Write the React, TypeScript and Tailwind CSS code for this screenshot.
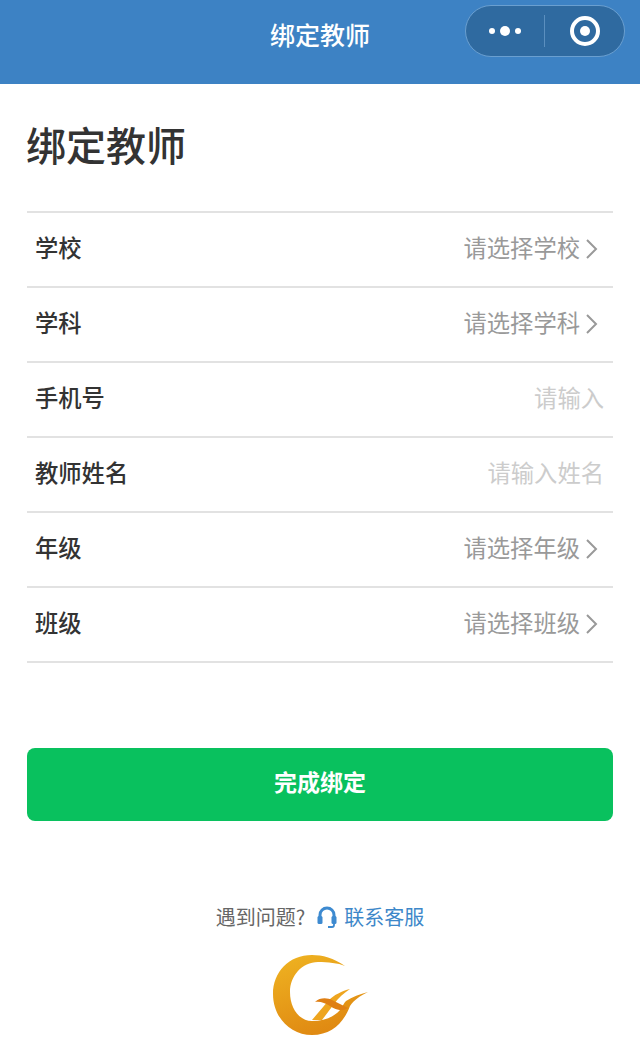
const FONT = "font-['Noto_Sans_CJK_SC','Noto_Sans',sans-serif]";

type Row = {
  label: string;
  value: string;
  arrow: boolean;
};

const rows: Row[] = [
  { label: "学校", value: "请选择学校", arrow: true },
  { label: "学科", value: "请选择学科", arrow: true },
  { label: "手机号", value: "请输入", arrow: false },
  { label: "教师姓名", value: "请输入姓名", arrow: false },
  { label: "年级", value: "请选择年级", arrow: true },
  { label: "班级", value: "请选择班级", arrow: true },
];

const Logo = () => (
  <svg width="96" height="81" viewBox="0 0 96 81">
    <defs>
      <linearGradient id="moon" x1="0" y1="0" x2="0.4" y2="1">
        <stop offset="0" stopColor="#efb422" />
        <stop offset="1" stopColor="#e08a12" />
      </linearGradient>
    </defs>
    <path
      d="M73 12C62 4 50 1 40 1 17 1 1 18 1 40c0 23 17 41 39 41 20 0 32-13 38-29 4-6 10-10 18-14-8 2-16 5-22 9-2 2-4 6-6 9-6 7-16 11-28 11-13 0-22-13-22-29C18 22 30 8 46 8c10 0 20 1 27 4Z"
      fill="url(#moon)"
    />
    <path d="M78 35c-8 2-16 6-21 11L40 66h10l12-16c4-6 10-11 16-15Z" fill="#eea51f" />
    <path d="M43 48c5-5 13-4 17-2l16 8c-6 4-12 2-18-2-5-3-10-5-15-4Z" fill="#df7f14" />
  </svg>
);

export default function App() {
  return (
    <div className={`${FONT} w-[640px] h-[1043px] bg-white overflow-hidden flex flex-col`}>
      <header className="relative h-[84px] bg-[#3d82c4] flex justify-center pt-[15px]">
        <span className="text-[25px] leading-[38px] font-medium text-white">绑定教师</span>
        <div className="absolute left-[465px] top-[5px] w-[160px] h-[52px] rounded-full bg-[#2f6aa0] border border-[#6a9fd0] flex items-center">
          <div className="flex-1 flex justify-center items-center gap-[5px]">
            <span className="w-[6px] h-[6px] rounded-full bg-white" />
            <span className="w-[10px] h-[10px] rounded-full bg-white" />
            <span className="w-[6px] h-[6px] rounded-full bg-white" />
          </div>
          <div className="w-px h-[32px] bg-[#5b8fbf]" />
          <div className="flex-1 flex justify-center pl-[2px]">
            <div className="w-[30px] h-[30px] rounded-full border-[4px] border-white flex items-center justify-center">
              <span className="w-[10px] h-[10px] rounded-full bg-white" />
            </div>
          </div>
        </div>
      </header>

      <main className="flex-1 px-[27px] flex flex-col">
        <h1 className="mt-[30px] -ml-px text-[40px] leading-[60px] font-medium text-[#333333]">绑定教师</h1>

        <div className="mt-[37px] border-t-2 border-[#e2e2e2]">
          {rows.map((row) => (
            <div
              key={row.label}
              className="h-[75px] border-b-2 border-[#e2e2e2] flex items-center justify-between pb-[5px] pl-[8px] pr-[9px]"
            >
              <span className="text-[23.3px] font-medium text-[#333333]">{row.label}</span>
              <span className={`flex items-center gap-[5px] ${row.arrow ? "pr-[6px]" : ""}`}>
                <span className={`text-[23.3px] ${row.arrow ? "text-[#999999]" : "text-[#cccccc]"}`}>{row.value}</span>
                {row.arrow && (
                  <svg className="mt-[3px]" width="13" height="22" viewBox="0 0 13 22" fill="none" stroke="#999999" strokeWidth="2">
                    <path d="M2 2 11 11 2 20" />
                  </svg>
                )}
              </span>
            </div>
          ))}
        </div>

        <button className="mt-[85px] h-[73px] rounded-[8px] bg-[#09c15e] pb-[6px] text-[23px] font-bold text-white">
          完成绑定
        </button>

        <div className="mt-[81px] flex items-center justify-center text-[20px] leading-[30px]">
          <span className="text-[#666666]">遇到问题?</span>
          <svg className="ml-[12px] mr-[7px]" width="20" height="22" viewBox="0 0 20 22" fill="none">
            <path d="M3 12V9a7 7 0 0 1 14 0v3" stroke="#3d8ad0" strokeWidth="3" />
            <rect x="0.5" y="10" width="5" height="8" rx="1.5" fill="#3d8ad0" />
            <rect x="14.5" y="10" width="5" height="8" rx="1.5" fill="#3d8ad0" />
            <path d="M17 17v2a2 2 0 0 1-2 2h-4" stroke="#3d8ad0" strokeWidth="1.8" />
          </svg>
          <span className="text-[#3d87c9]">联系客服</span>
        </div>

        <div className="mt-[22px] flex justify-center">
          <Logo />
        </div>
      </main>
    </div>
  );
}
